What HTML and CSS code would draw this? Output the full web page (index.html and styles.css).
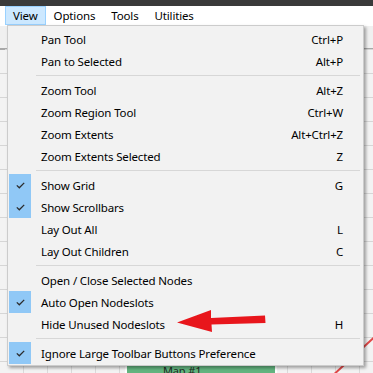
FILE: index.html
```html
<!DOCTYPE html>
<html lang="en">
<head>
  <meta charset="UTF-8">
  <meta name="viewport" content="width=device-width, initial-scale=1.0">
  <title>View Menu</title>
  <link rel="stylesheet" href="styles.css">
</head>
<body>
  <div class="titlebar"></div>

  <nav class="menubar">
    <span class="menubar-item active">View</span>
    <span class="menubar-item">Options</span>
    <span class="menubar-item">Tools</span>
    <span class="menubar-item">Utilities</span>
  </nav>

  <!-- workspace behind the open menu -->
  <main class="workspace">
    <div class="side-scroll"></div>
    <div class="toolbar-strip"></div>
    <svg class="link-line" width="373" height="373" viewBox="0 0 373 373">
      <line x1="380" y1="332" x2="330" y2="378" stroke="#e04848" stroke-width="2"/>
    </svg>
    <div class="map-node"><span>Map #1</span></div>
  </main>

  <!-- dropdown -->
  <div class="menu">
    <div class="item"><span class="gutter"></span><span class="label">Pan Tool</span><span class="key">Ctrl+P</span></div>
    <div class="item"><span class="gutter"></span><span class="label">Pan to Selected</span><span class="key">Alt+P</span></div>
    <div class="sep"></div>
    <div class="item"><span class="gutter"></span><span class="label">Zoom Tool</span><span class="key">Alt+Z</span></div>
    <div class="item"><span class="gutter"></span><span class="label">Zoom Region Tool</span><span class="key">Ctrl+W</span></div>
    <div class="item"><span class="gutter"></span><span class="label">Zoom Extents</span><span class="key">Alt+Ctrl+Z</span></div>
    <div class="item"><span class="gutter"></span><span class="label">Zoom Extents Selected</span><span class="key">Z</span></div>
    <div class="sep"></div>
    <div class="item checked"><span class="gutter"><span class="check"><svg width="9" height="7" viewBox="0 0 9 7"><path d="M0.8 3.4 L3.3 5.8 L8.2 0.9" fill="none" stroke="#2b2b2b" stroke-width="1.3"/></svg></span></span><span class="label">Show Grid</span><span class="key">G</span></div>
    <div class="item checked"><span class="gutter"><span class="check"><svg width="9" height="7" viewBox="0 0 9 7"><path d="M0.8 3.4 L3.3 5.8 L8.2 0.9" fill="none" stroke="#2b2b2b" stroke-width="1.3"/></svg></span></span><span class="label">Show Scrollbars</span><span class="key"></span></div>
    <div class="item"><span class="gutter"></span><span class="label">Lay Out All</span><span class="key">L</span></div>
    <div class="item"><span class="gutter"></span><span class="label">Lay Out Children</span><span class="key">C</span></div>
    <div class="sep"></div>
    <div class="item"><span class="gutter"></span><span class="label">Open / Close Selected Nodes</span><span class="key"></span></div>
    <div class="item checked"><span class="gutter"><span class="check"><svg width="9" height="7" viewBox="0 0 9 7"><path d="M0.8 3.4 L3.3 5.8 L8.2 0.9" fill="none" stroke="#2b2b2b" stroke-width="1.3"/></svg></span></span><span class="label">Auto Open Nodeslots</span><span class="key"></span></div>
    <div class="item"><span class="gutter"></span><span class="label">Hide Unused Nodeslots</span><span class="key">H</span></div>
    <div class="sep"></div>
    <div class="item checked"><span class="gutter"><span class="check"><svg width="9" height="7" viewBox="0 0 9 7"><path d="M0.8 3.4 L3.3 5.8 L8.2 0.9" fill="none" stroke="#2b2b2b" stroke-width="1.3"/></svg></span></span><span class="label">Ignore Large Toolbar Buttons Preference</span><span class="key"></span></div>
  </div>

  <!-- red callout arrow -->
  <svg class="callout" width="95" height="30" viewBox="0 0 95 30">
    <path d="M89 8.5 L35 11 L35 3 L1 15.5 L36 25 L35.5 17.5 L89.5 16 Z" fill="#e8161c"/>
  </svg>
</body>
</html>
```

FILE: styles.css
```css
body {
  margin: 0;
  width: 373px;
  height: 373px;
  overflow: hidden;
  position: relative;
  font-family: "Segoe UI", "Noto Sans", sans-serif;
  font-size: 11.5px;
  letter-spacing: -0.15px;
  color: #000;
  background-color: #f0f0f0;
}

.titlebar {
  height: 6px;
  background-color: #3a3a3a;
}

.menubar {
  display: flex;
  height: 19px;
  padding-left: 5px;
  background-color: #fff;
  border-bottom: 1px solid #fff;
}

.menubar-item {
  display: flex;
  align-items: center;
  padding: 0 7px 0 7px;
  border: 1px solid transparent;
  line-height: 17px;
}

.menubar-item.active {
  background-color: #cce8ff;
  border-color: #99d1ff;
}

.workspace {
  position: relative;
  height: 347px;
  background-color: #f3f3f3;
  background-image:
    repeating-linear-gradient(to bottom, transparent 0, transparent 23px, #d6d6d6 23px, #d6d6d6 24px),
    repeating-linear-gradient(to right, transparent 0, transparent 23px, #dadada 23px, #dadada 24px);
}

.side-scroll {
  position: absolute;
  left: 0;
  top: 0;
  width: 5px;
  height: 24px;
  background-color: #a9a9a9;
}

.toolbar-strip {
  position: absolute;
  left: 0;
  right: 0;
  top: 0;
  height: 22px;
  background-color: #f0f0f0;
  border-bottom: 1px solid #a8a8a8;
}

.link-line {
  position: absolute;
  left: 0;
  top: -26px;
}

.map-node {
  position: absolute;
  left: 125px;
  top: 337px;
  width: 148px;
  height: 20px;
  border: 2px solid #fff;
  background-color: #63b47f;
  font-size: 11px;
}

.map-node span {
  display: block;
  padding: 0 0 0 36px;
  line-height: 12px;
  color: #1f2a22;
}

.menu {
  position: absolute;
  left: 7px;
  top: 25px;
  width: 355px;
  padding: 2px 0 1px 0;
  background-color: #f2f2f2;
  border: 1px solid #cccccc;
  box-shadow: 2px 2px 3px rgba(0, 0, 0, 0.35);
}

.item {
  display: grid;
  grid-template-columns: 33px 1fr auto;
  align-items: center;
  height: 22px;
  padding-right: 20px;
}

.gutter {
  display: flex;
  height: 22px;
  padding-left: 1px;
}

.check {
  display: flex;
  align-items: center;
  justify-content: center;
  width: 22px;
  height: 22px;
  background-color: #90c8f6;
}

.key {
  text-align: right;
}

.sep {
  height: 3px;
  margin: 0 3px 3px 28px;
  border-bottom: 1px solid #d7d7d7;
}

.callout {
  position: absolute;
  left: 176px;
  top: 307px;
}
```
